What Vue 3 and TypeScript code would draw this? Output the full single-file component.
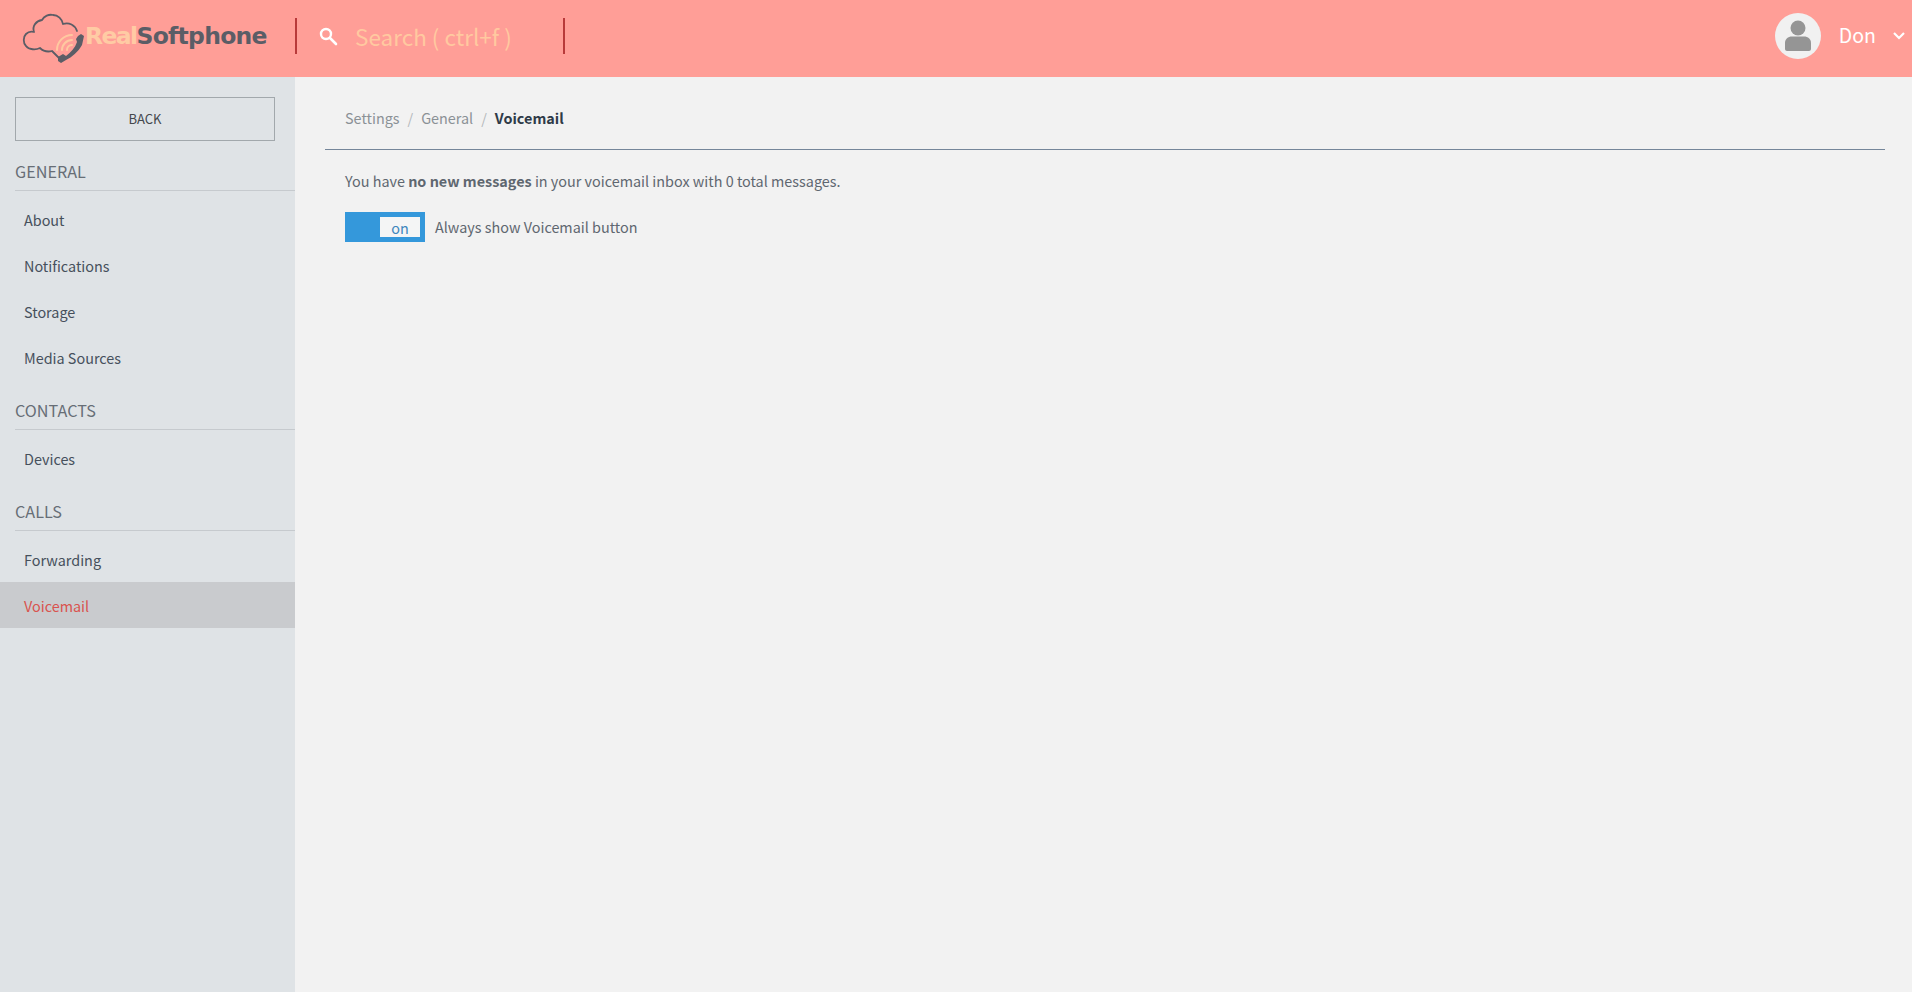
<script setup lang="ts">
interface Group { title: string; items: string[] }
const groups: Group[] = [
  { title: 'GENERAL', items: ['About', 'Notifications', 'Storage', 'Media Sources'] },
  { title: 'CONTACTS', items: ['Devices'] },
  { title: 'CALLS', items: ['Forwarding', 'Voicemail'] },
]
const active = 'Voicemail'
</script>

<template>
  <div class="page">
    <header class="topbar">
      <div class="brand">
        <svg class="logo-mark" width="70" height="60" viewBox="0 0 70 60" fill="none">
          <path d="M43 51 L36 44 C32 45 27 44 24 41 C20 43 13 43 10 39 C7 36 7 30 10 27 C12 25 15 24 18 25 C16 19 20 14 26 13 C28 9 33 7 37 8 C42 8 46 12 47 17 C53 15 59 18 61 24" stroke="#5b5d66" stroke-width="1.8" stroke-linejoin="round" stroke-linecap="round"/>
          <path d="M41 43 A15 15 0 0 1 56 28 M46 43 A10 10 0 0 1 56 33 M51 43 A5 5 0 0 1 56 38" stroke="#ffc9a0" stroke-width="2" stroke-linecap="round"/>
          <path d="M62 29 L65 27 L68 29 L66 38 C62 45 56 50 50 53 L45 56 L42 54 L42 50 L47 47 L50 49 C55 45 59 41 61 35 L60 32 Z" fill="#5b5d66"/>
        </svg>
        <span class="wordmark"><span class="word-real">Real</span><span class="word-soft">Softphone</span></span>
      </div>
      <div class="search">
        <svg class="search-icon" width="20" height="20" viewBox="0 0 20 20" fill="none">
          <circle cx="8" cy="8" r="5" stroke="#fff" stroke-width="2.4"/>
          <path d="M12 12 L18 18" stroke="#fff" stroke-width="2.6" stroke-linecap="round"/>
        </svg>
        <span class="search-text">Search ( ctrl+f )</span>
      </div>
      <div class="user">
        <span class="avatar">
          <svg width="46" height="46" viewBox="0 0 46 46">
            <circle cx="23" cy="15" r="7.5" fill="#959595"/>
            <path d="M10 36 L10 30 C10 26 13 23.5 17 23.5 L29 23.5 C33 23.5 36 26 36 30 L36 36 C36 37 35 38 34 38 L12 38 C11 38 10 37 10 36 Z" fill="#959595"/>
          </svg>
        </span>
        <span class="user-name">Don</span>
        <svg class="chevron" width="14" height="9" viewBox="0 0 14 9" fill="none">
          <path d="M2 2 L7 7 L12 2" stroke="#fff" stroke-width="2.2"/>
        </svg>
      </div>
    </header>

    <div class="body">
      <aside class="sidebar">
        <button class="back">BACK</button>
        <section v-for="g in groups" :key="g.title" class="group">
          <h3 class="group-title">{{ g.title }}</h3>
          <ul class="menu">
            <li v-for="i in g.items" :key="i" class="menu-item" :class="{ on: i === active }">{{ i }}</li>
          </ul>
        </section>
      </aside>

      <main class="content">
        <nav class="crumbs">
          <span>Settings</span><i>/</i><span>General</span><i>/</i><b>Voicemail</b>
        </nav>
        <div class="panel">
          <p class="message">You have <strong>no new messages</strong> in your voicemail inbox with 0 total messages.</p>
          <div class="setting">
            <span class="toggle"><span class="knob">on</span></span>
            <span class="setting-label">Always show Voicemail button</span>
          </div>
        </div>
      </main>
    </div>
  </div>
</template>

<style>
html, body { margin: 0; padding: 0; background: #f2f2f2; }
</style>

<style scoped>
.page {
  width: 1912px;
  height: 992px;
  display: flex;
  flex-direction: column;
  overflow: hidden;
  font-family: "Noto Sans CJK SC", "Open Sans", sans-serif;
  font-size: 14.4px;
  color: #5f6770;
  background: #f2f2f2;
}
.topbar {
  height: 77px;
  box-sizing: border-box;
  padding-bottom: 5px;
  flex: none;
  background: #ff9e97;
  display: flex;
  align-items: center;
}
.brand {
  width: 295px;
  flex: none;
  box-sizing: border-box;
  padding-left: 16px;
  display: flex;
  align-items: center;
}
.logo-mark { flex: none; margin-top: 2px; margin-right: -1px; }
.wordmark {
  font-family: "DejaVu Sans", sans-serif;
  font-weight: 700;
  font-size: 23.5px;
  line-height: 30px;
  margin-top: -1px;
}
.word-real { color: #ffcba4; letter-spacing: -1.6px; }
.word-soft { color: #5b5d66; letter-spacing: -0.75px; }
.search {
  width: 270px;
  height: 36px;
  box-sizing: border-box;
  border-left: 2px solid #b83a3a;
  border-right: 2px solid #b83a3a;
  padding-left: 21px;
  display: flex;
  align-items: center;
  gap: 17px;
}
.search-text {
  color: #ffc9a0;
  font-size: 22.5px;
  line-height: 30px;
}
.user {
  margin-left: auto;
  display: flex;
  align-items: center;
  padding-right: 6px;
}
.avatar {
  width: 46px;
  height: 46px;
  border-radius: 50%;
  background: #f1f1f1;
  overflow: hidden;
  display: block;
}
.avatar svg { display: block; }
.user-name {
  color: #fff;
  font-size: 19.5px;
  line-height: 28px;
  margin-left: 18px;
  margin-top: -2px;
}
.chevron { margin-left: 16px; margin-top: -2px; }
.body {
  flex: 1;
  display: flex;
  min-height: 0;
}
.sidebar {
  width: 295px;
  flex: none;
  box-sizing: border-box;
  background: #dfe3e6;
  padding-top: 20px;
}
.back {
  display: block;
  width: 260px;
  height: 44px;
  margin: 0 0 0 15px;
  padding: 0;
  border: 1px solid #a2a8ac;
  background: transparent;
  color: #44484d;
  font: 400 13px/20px "Noto Sans CJK SC", sans-serif;
}
.group-title {
  margin: 0 0 5px 15px;
  height: 49px;
  box-sizing: content-box;
  border-bottom: 1px solid #c6cace;
  padding: 0;
  font-weight: 400;
  font-size: 16.2px;
  line-height: 60px;
  color: #676e76;
}
.menu { list-style: none; margin: 0; padding: 0; }
.menu-item {
  height: 46px;
  line-height: 47px;
  padding-left: 24px;
  color: #46505c;
  font-size: 14.4px;
}
.menu-item.on {
  background: #c9cbce;
  color: #d9534f;
}
.content {
  flex: 1;
  min-width: 0;
  padding: 0 27px 0 30px;
}
.crumbs {
  height: 73px;
  box-sizing: border-box;
  border-bottom: 1px solid #75869a;
  padding: 8px 0 0 20px;
  display: flex;
  align-items: center;
  font-size: 14.4px;
  color: #8b9196;
}
.crumbs i { font-style: normal; margin: 0 8px; color: #b4b8bb; }
.crumbs b { color: #2f3b48; font-weight: 700; }
.panel { padding: 19px 0 0 20px; }
.message {
  margin: 0;
  line-height: 24px;
  font-size: 14.4px;
  color: #5f6770;
}
.message strong { font-weight: 700; }
.setting {
  display: flex;
  align-items: center;
  margin-top: 19px;
  gap: 10px;
}
.toggle {
  width: 80px;
  height: 30px;
  box-sizing: border-box;
  background: #3498db;
  padding: 5px 5px 5px 35px;
  flex: none;
}
.knob {
  display: block;
  height: 20px;
  background: #f4f5f5;
  text-align: center;
  line-height: 21px;
  color: #3d86bd;
  font-size: 14.4px;
}
.setting-label { font-size: 14.4px; line-height: 24px; color: #5f6770; }
</style>
